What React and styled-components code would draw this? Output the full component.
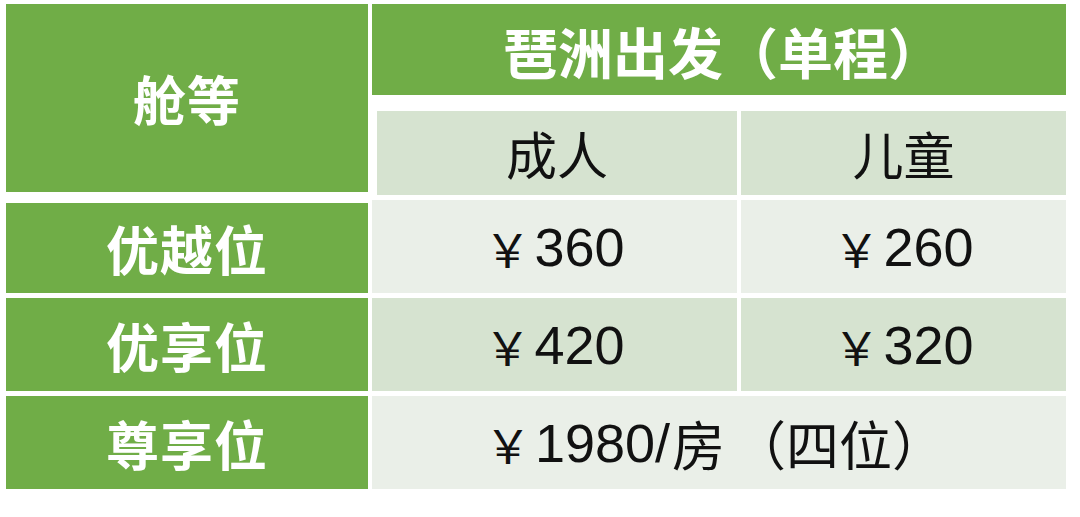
import React from 'react';
import styled, { createGlobalStyle } from 'styled-components';

const GlobalStyle = createGlobalStyle`
  html, body {
    margin: 0;
    padding: 0;
    background: #ffffff;
  }
  body {
    font-family: "Noto Sans CJK SC", "Noto Sans", sans-serif;
  }
`;

const Page = styled.div`
  width: 1080px;
  height: 517px;
  padding: 4px 0 0 6px;
  box-sizing: border-box;
  background: #ffffff;
`;

const Table = styled.div`
  display: grid;
  grid-template-columns: 362px 365px 325px;
  grid-template-rows: 91px 95px 93px 93px 93px;
  column-gap: 4px;
  row-gap: 5px;
`;

const GreenCell = styled.div`
  background: #70ad47;
  color: #ffffff;
  font-weight: 700;
  font-size: 53px;
  display: flex;
  align-items: center;
  justify-content: center;
  letter-spacing: 1px;
  grid-column: ${(p) => p.$col || 'auto'};
  grid-row: ${(p) => p.$row || 'auto'};
  margin: ${(p) => p.$margin || '0'};
`;

const TitleCell = styled(GreenCell)`
  font-size: 55px;
  letter-spacing: 0;
  padding-left: 8px;
`;

const SubCell = styled.div`
  background: #d6e3d0;
  color: #111111;
  font-size: 51px;
  display: flex;
  align-items: center;
  justify-content: center;
  margin: ${(p) => p.$margin || '11px 0 0 0'};
`;

const PriceCell = styled.div`
  background: ${(p) => (p.$dark ? '#d6e3d0' : '#eaefe8')};
  color: #111111;
  font-family: "Liberation Sans", "Noto Sans CJK SC", sans-serif;
  font-size: 54px;
  display: flex;
  align-items: center;
  justify-content: center;
  grid-column: ${(p) => p.$col || 'auto'};
  padding-right: ${(p) => p.$shift || '0'};
`;

const Yen = styled.span`
  font-family: "Noto Sans CJK SC", sans-serif;
  font-size: 46px;
  margin-right: 4px;
`;

const Cjk = styled.span`
  font-family: "Noto Sans CJK SC", sans-serif;
  font-size: 53px;
  margin-left: 2px;
`;

const Paren = styled.span`
  margin-left: 8px;
`;

const rows = [
  { label: '优越位', adult: '360', child: '260', dark: false },
  { label: '优享位', adult: '420', child: '320', dark: true },
];

export default function App() {
  return (
    <>
      <GlobalStyle />
      <Page>
        <Table>
          <GreenCell $row="1 / 3" $margin="0 0 3px 0">舱等</GreenCell>
          <TitleCell $col="2 / 4">琶洲出发（单程）</TitleCell>
          <SubCell $margin="11px 0 0 5px">成人</SubCell>
          <SubCell>儿童</SubCell>

          {rows.map((r) => (
            <React.Fragment key={r.label}>
              <GreenCell $margin={r.dark ? '0' : '3px 0 0 0'}>{r.label}</GreenCell>
              <PriceCell $dark={r.dark}>
                <Yen>￥</Yen>
                {r.adult}
              </PriceCell>
              <PriceCell $dark={r.dark}>
                <Yen>￥</Yen>
                {r.child}
              </PriceCell>
            </React.Fragment>
          ))}

          <GreenCell>尊享位</GreenCell>
          <PriceCell $col="2 / 4" $shift="8px">
            <Yen>￥</Yen>
            1980/<Cjk>房<Paren>（四位）</Paren></Cjk>
          </PriceCell>
        </Table>
      </Page>
    </>
  );
}
